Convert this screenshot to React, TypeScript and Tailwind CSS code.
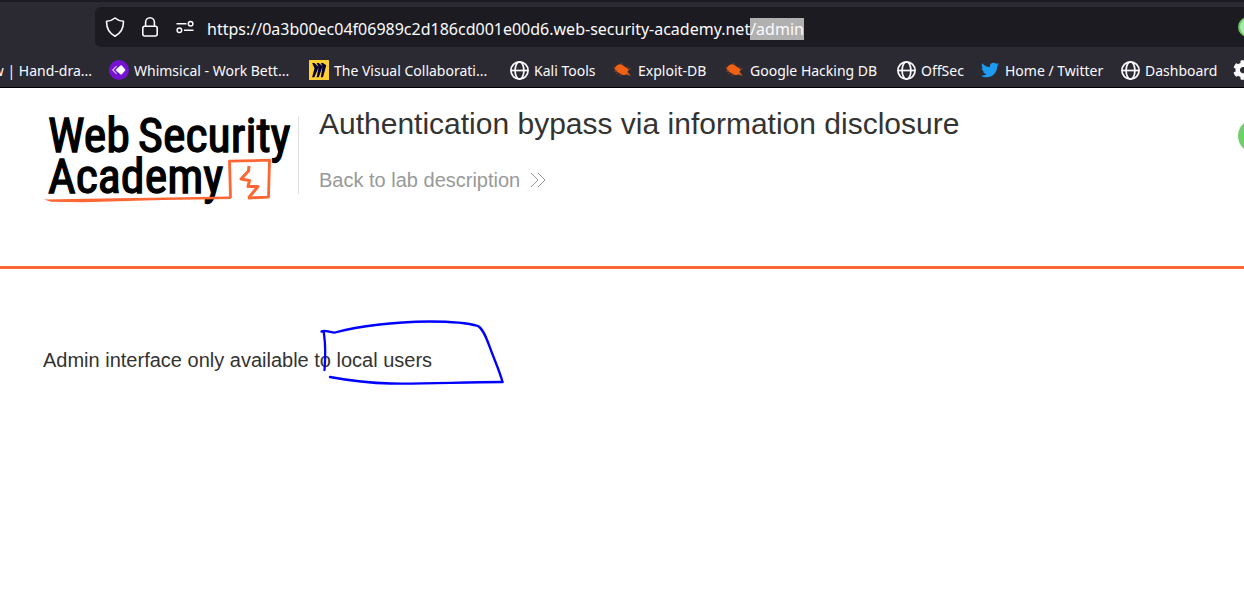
import { useEffect, useRef, type ReactNode } from "react";
import { FaTwitter, FaCog } from "react-icons/fa";

const origin = "https://0a3b00ec04f06989c2d186cd001e00d6.web-security-academy.net";
const path = "/admin";

function Shield() {
  return (
    <svg viewBox="0 0 20 20" className="size-5" fill="none" stroke="#fbfbfe" strokeWidth="1.6" strokeLinejoin="round">
      <path d="M10 1 C8 2.8 4.5 4 1.6 4.3 C1.3 11 3.8 16 10 19.2 C16.2 16 18.7 11 18.4 4.3 C15.5 4 12 2.8 10 1Z" />
    </svg>
  );
}

function Lock() {
  return (
    <svg viewBox="0 0 20 20" className="size-5" fill="none" stroke="#fbfbfe" strokeWidth="1.6">
      <rect x="2.8" y="9.2" width="14.4" height="9.8" rx="2" />
      <path d="M5.6 9.2V5.2a4.4 4.4 0 0 1 8.8 0v4" />
    </svg>
  );
}

function Permissions() {
  return (
    <svg viewBox="0 0 20 20" className="size-5" fill="none" stroke="#fbfbfe" strokeWidth="1.5">
      <path d="M1.5 6.8h10M9 13.2h9.5" />
      <circle cx="15.6" cy="6.8" r="2.3" />
      <circle cx="4.4" cy="13.2" r="2.3" />
    </svg>
  );
}

function Globe() {
  return (
    <svg viewBox="0 0 20 20" className="size-5" fill="none" stroke="#fbfbfe" strokeWidth="1.7">
      <circle cx="10.5" cy="10.5" r="8.6" />
      <ellipse cx="10.5" cy="10.5" rx="4.4" ry="8.6" />
      <path d="M1.9 10.5h17.2" />
    </svg>
  );
}

function Whimsical() {
  return (
    <svg viewBox="0 0 20 20" className="size-5">
      <circle cx="10" cy="10" r="10" fill="#7413d0" />
      <path d="M7.6 6.2 3.8 10l3.8 3.8" fill="none" stroke="#d9b8f5" strokeWidth="1.2" />
      <path d="M11.4 5.6a1 1 0 0 1 1.4 0l3.2 3.6a1 1 0 0 1 0 1.5l-3.2 3.6a1 1 0 0 1-1.4 0L7.3 10.7a1 1 0 0 1 0-1.5z" fill="#fff" />
    </svg>
  );
}

function Miro() {
  return (
    <svg viewBox="0 0 20 20" className="size-5">
      <rect width="20" height="20" rx="0.6" fill="#ffd02f" />
      <path
        d="M14 3h-2.2l1.7 3.2L9.8 3H7.6l2 4L5.4 3H3.1l2.4 5.2L3.1 17.2h2.3L9.6 7.2 7.6 17.2h2.2L13.5 6.4 11.8 17.2H14L17.3 5.2z"
        fill="#050038"
      />
    </svg>
  );
}

function Exploit() {
  return (
    <svg viewBox="0 0 20 20" className="size-5">
      <path
        d="M1.4 8.6C2.2 6.4 4 4.8 5.600 4.400C8 3.800 10 5 11.800 6.800C13.400 8 15 8.400 15.800 9.800C15.600 10.800 14.600 11.200 14.400 12C15.400 13.200 16.800 14.200 17.400 15.400C16.200 14.800 14.800 14.400 13.800 14.600C11.400 15.600 8.400 14.600 6.600 13.200C4.600 12.600 2.600 11 1.400 8.600Z"
        fill="#f26012"
      />
      <path
        d="M.4 7l3 1M1 11.600l3.600-1.400M2.600 14.200l4-2M6.200 16l3-2.600M8 2.600l1.600 2.800M13.400 8l2-2M15 9.400l3-.8M13 14l4.400 2"
        fill="none"
        stroke="#9a4a26"
        strokeWidth="0.7"
      />
    </svg>
  );
}

const bookmarks: { label: string; icon: ReactNode }[] = [
  { label: "Whimsical - Work Bett...", icon: <Whimsical /> },
  { label: "The Visual Collaborati...", icon: <Miro /> },
  { label: "Kali Tools", icon: <Globe /> },
  { label: "Exploit-DB", icon: <Exploit /> },
  { label: "Google Hacking DB", icon: <Exploit /> },
  { label: "OffSec", icon: <Globe /> },
  { label: "Home / Twitter", icon: <FaTwitter className="size-[18px] text-[#1d9bf0]" /> },
  { label: "Dashboard", icon: <Globe /> },
  { label: "", icon: <FaCog className="size-5" /> },
];

function AddressBar() {
  const ref = useRef<HTMLInputElement>(null);
  useEffect(() => {
    ref.current?.focus();
    ref.current?.setSelectionRange(origin.length, origin.length + path.length);
  }, []);
  return (
    <div className="ml-[95px] flex h-10 items-center overflow-hidden rounded-l-md bg-[#1c1b22]">
      <div className="flex shrink-0 items-center gap-[15px] pl-[10px]">
        <Shield />
        <Lock />
        <Permissions />
      </div>
      <input
        ref={ref}
        aria-label="Address"
        defaultValue={origin + path}
        spellCheck={false}
        className="ml-3 mt-1 h-7 min-w-0 flex-1 bg-transparent text-base text-[#fbfbfe] outline-none selection:bg-[#b0b0b0] selection:text-[#fbfbfe]"
      />
      <span className="-mr-[14px] size-5 shrink-0 rounded-full border-2 border-[#6fc95c] bg-[#a5e8b4]" />
    </div>
  );
}

function Logo() {
  return (
    <svg viewBox="0 0 256 96" className="h-24 w-64 shrink-0" role="img" aria-label="Web Security Academy">
      <g
        fontFamily="'Roboto Condensed', 'Liberation Sans Narrow', 'Liberation Sans', sans-serif"
        fontSize="48"
        fill="#000"
        stroke="#000"
        strokeWidth="1.3"
      >
        <text x="5" y="40">Web</text>
        <text x="95" y="40">Security</text>
        <text x="5" y="81">Academy</text>
      </g>
      <g fill="none" stroke="#ff6633" strokeWidth="2.8" strokeLinejoin="round">
        <path d="M187.5 86 L186.5 49.2 L226.5 48.2 L225.5 85.2 L205 86" />
        <path d="M206 54 L205.5 59 L198 67 L206.5 68.5 L205 74.5 L215 74.5 L205.5 86" strokeWidth="3" />
      </g>
      <path d="M1 87.5 L60 86.4 L187 84.6 L188 87 L120 88 L40 90.2 L8 89.8Z" fill="#ff6633" />
    </svg>
  );
}

export default function App() {
  return (
    <div className="min-h-screen overflow-hidden bg-white font-['Liberation_Sans',Arial,sans-serif] text-[#333332]">
      <div className="border-b border-black bg-[#2b2a33] font-['Noto_Sans','Open_Sans',sans-serif] text-[#fbfbfe]">
        <div className="mb-[5px] h-[2px] bg-[#1c1b22]" />
        <AddressBar />
        <nav aria-label="Bookmarks" className="flex h-10 items-center overflow-hidden pt-2 text-sm whitespace-nowrap">
          <a href="#" className="flex w-[109px] shrink-0 justify-end pr-[17px]">w | Hand-dra...</a>
          <div className="grid shrink-0 grid-cols-[200px_200px_104px_112px_171px_84px_140px_113px_20px]">
            {bookmarks.map((b, i) => (
              <a key={i} href="#" aria-label={b.label || "Settings"} className="flex items-center gap-[5px]">
                <span className="mb-[2px] flex size-5 shrink-0 items-center justify-center">{b.icon}</span>
                {b.label}
              </a>
            ))}
          </div>
        </nav>
      </div>

      <header className="flex h-[181px] items-start border-b-3 border-[#ff6633] pl-[43px]">
        <div className="mt-7 flex h-[78px] items-start border-r border-[#e0e0e0]">
          <div className="-mt-4 -mr-px pt-3">
            <Logo />
          </div>
        </div>
        <div className="flex-1 pt-[18px] pl-5">
          <h1 className="text-3xl">Authentication bypass via information disclosure</h1>
          <a href="#" className="mt-6 flex items-center gap-[10px] text-xl text-[#999999]">
            Back to lab description
            <svg viewBox="0 0 16 16" className="size-4" fill="none" stroke="#999999" strokeWidth="1">
              <path d="M1 1l7 7-7 7M8 1l7 7-7 7" />
            </svg>
          </a>
        </div>
        <span className="mt-[31px] -mr-7 size-[34px] shrink-0 rounded-full bg-[#6dd06b]" />
      </header>

      <main className="px-[43px] pt-[77px]">
        <p className="relative text-xl">
          Admin interface only available to local users
          <svg
            viewBox="0 0 190 70"
            className="pointer-events-none absolute -top-[29px] left-[275px] h-[70px] w-[190px]"
            fill="none"
            stroke="#0000ff"
            strokeWidth="2.3"
            strokeLinecap="round"
            strokeLinejoin="round"
            aria-hidden="true"
          >
            <path d="M6.5 53 C7.5 40 7 24 6 17 Q5.5 13 3.5 14.5 C7 12 11 16 17 15.5 C45 8 80 5 112 4.5 C130 4.5 150 6 160 9 C165 12 168 20 171 28 C176 42 182 55 184.5 65" />
            <path d="M184.5 65 C145 65 110 67 73 66.5 C48 66 28 63 12 60" />
          </svg>
        </p>
      </main>
    </div>
  );
}
